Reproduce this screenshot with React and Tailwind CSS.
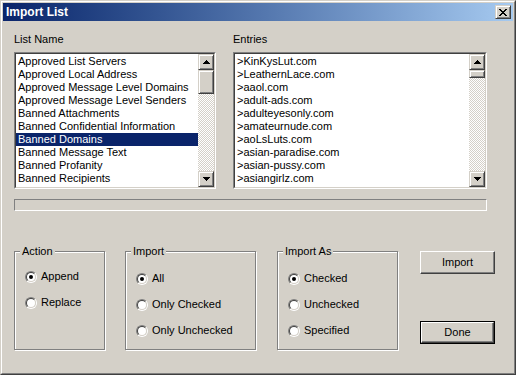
import React from 'react';

const listNames = [
  'Approved List Servers',
  'Approved Local Address',
  'Approved Message Level Domains',
  'Approved Message Level Senders',
  'Banned Attachments',
  'Banned Confidential Information',
  'Banned Domains',
  'Banned Message Text',
  'Banned Profanity',
  'Banned Recipients',
  'Banned Senders',
];

const entries = [
  '>KinKysLut.com',
  '>LeathernLace.com',
  '>aaol.com',
  '>adult-ads.com',
  '>adulteyesonly.com',
  '>amateurnude.com',
  '>aoLsLuts.com',
  '>asian-paradise.com',
  '>asian-pussy.com',
  '>asiangirlz.com',
  '>asiannude.com',
];

const raised =
  'bg-[#d4d0c8] border border-t-[#d4d0c8] border-l-[#d4d0c8] border-r-[#404040] border-b-[#404040] shadow-[inset_1px_1px_0_#fff,inset_-1px_-1px_0_#808080]';

const Arrow = ({ up }) => (
  <svg width="7" height="4" viewBox="0 0 7 4" shapeRendering="crispEdges">
    {up ? (
      <g fill="#000">
        <rect x="3" y="0" width="1" height="1" />
        <rect x="2" y="1" width="3" height="1" />
        <rect x="1" y="2" width="5" height="1" />
        <rect x="0" y="3" width="7" height="1" />
      </g>
    ) : (
      <g fill="#000">
        <rect x="0" y="0" width="7" height="1" />
        <rect x="1" y="1" width="5" height="1" />
        <rect x="2" y="2" width="3" height="1" />
        <rect x="3" y="3" width="1" height="1" />
      </g>
    )}
  </svg>
);

const Scrollbar = ({ thumb }) => (
  <div className="w-[16px] flex flex-col bg-[repeating-conic-gradient(#d4d0c8_0_25%,#fff_0_50%)] bg-[length:2px_2px]">
    <div className={`h-[16px] flex items-center justify-center ${raised}`}>
      <Arrow up />
    </div>
    <div className={`${thumb} ${raised}`} />
    <div className="flex-1" />
    <div className={`h-[16px] flex items-center justify-center ${raised}`}>
      <Arrow />
    </div>
  </div>
);

const ListBox = ({ items, selected, width, thumb }) => (
  <div className={`${width} h-[137px] flex border border-t-[#808080] border-l-[#808080] border-r-white border-b-white`}>
    <div className="flex-1 flex bg-white border border-t-[#404040] border-l-[#404040] border-r-[#d4d0c8] border-b-[#d4d0c8]">
      <div className="flex-1 overflow-hidden pt-[1px]">
        {items.map((item, i) => (
          <div
            key={item}
            className={`h-[13px] leading-[13px] pl-[2px] whitespace-nowrap ${
              i === selected ? 'bg-[#0a246a] text-white' : 'text-black'
            }`}
          >
            {item}
          </div>
        ))}
      </div>
      <Scrollbar thumb={thumb} />
    </div>
  </div>
);

const Radio = ({ label, checked }) => (
  <div className="h-[13px] flex items-center gap-[4px]">
    <div className="w-[12px] h-[12px] rounded-full border border-t-[#808080] border-l-[#808080] border-r-white border-b-white">
      <div className="w-full h-full rounded-full bg-white border border-t-[#404040] border-l-[#404040] border-r-[#d4d0c8] border-b-[#d4d0c8] flex items-center justify-center">
        {checked && <div className="w-[4px] h-[4px] rounded-full bg-black" />}
      </div>
    </div>
    <span className="leading-[13px]">{label}</span>
  </div>
);

const GroupBox = ({ title, width, top, children }) => (
  <div className={`relative ${width} h-[99px] border border-[#808080] shadow-[inset_1px_1px_0_#fff,1px_1px_0_#fff]`}>
    <span className="absolute -top-[7px] left-[5px] px-[2px] h-[13px] leading-[13px] bg-[#d4d0c8]">{title}</span>
    <div className={`flex flex-col gap-[13px] pl-[10px] ${top}`}>{children}</div>
  </div>
);

const Button = ({ children, isDefault }) => (
  <div className={`w-[75px] h-[23px] ${isDefault ? 'border border-black' : ''}`}>
    <div className="w-full h-full flex items-center justify-center bg-[#d4d0c8] border border-t-white border-l-white border-r-[#404040] border-b-[#404040] shadow-[inset_-1px_-1px_0_#808080]">
      {children}
    </div>
  </div>
);

export default function App() {
  return (
    <div className="w-[516px] h-[375px] bg-[#d4d0c8] text-[11px] text-black font-['Liberation_Sans',Arial,sans-serif] border border-t-[#d4d0c8] border-l-[#d4d0c8] border-r-[#404040] border-b-[#404040]">
      <div className="h-full flex flex-col p-[1px] border border-t-white border-l-white border-r-[#808080] border-b-[#808080]">
        {/* title bar */}
        <div className="h-[18px] flex items-center justify-between pl-[3px] pr-[2px] bg-gradient-to-r from-[#0a246a] to-[#a6caf0]">
          <span className="text-white font-bold text-[12px] leading-[18px]">Import List</span>
          <div className={`w-[16px] h-[14px] flex items-center justify-center ${raised}`}>
            <svg width="8" height="7" viewBox="0 0 8 7" shapeRendering="crispEdges">
              <g fill="#000">
                <rect x="0" y="0" width="2" height="1" />
                <rect x="6" y="0" width="2" height="1" />
                <rect x="1" y="1" width="2" height="1" />
                <rect x="5" y="1" width="2" height="1" />
                <rect x="2" y="2" width="4" height="1" />
                <rect x="3" y="3" width="2" height="1" />
                <rect x="2" y="4" width="4" height="1" />
                <rect x="1" y="5" width="2" height="1" />
                <rect x="5" y="5" width="2" height="1" />
                <rect x="0" y="6" width="2" height="1" />
                <rect x="6" y="6" width="2" height="1" />
              </g>
            </svg>
          </div>
        </div>

        <div className="flex-1 flex flex-col pl-[11px] pt-[12px]">
          <div className="flex gap-[17px]">
            <div className="flex flex-col">
              <div className="h-[13px] leading-[13px]">List Name</div>
              <div className="mt-[6px]">
                <ListBox items={listNames} selected={6} width="w-[202px]" thumb="h-[24px]" />
              </div>
            </div>
            <div className="flex flex-col">
              <div className="h-[13px] leading-[13px]">Entries</div>
              <div className="mt-[6px]">
                <ListBox items={entries} selected={-1} width="w-[254px]" thumb="h-[8px]" />
              </div>
            </div>
          </div>

          {/* progress */}
          <div className="w-[473px] h-[12px] mt-[10px] border border-t-[#808080] border-l-[#808080] border-r-white border-b-white" />

          <div className="flex items-start mt-[40px]">
            <GroupBox title="Action" width="w-[91px]" top="pt-[18px]">
              <Radio label="Append" checked />
              <Radio label="Replace" />
            </GroupBox>
            <div className="ml-[20px]">
              <GroupBox title="Import" width="w-[131px]" top="pt-[20px]">
                <Radio label="All" checked />
                <Radio label="Only Checked" />
                <Radio label="Only Unchecked" />
              </GroupBox>
            </div>
            <div className="ml-[21px]">
              <GroupBox title="Import As" width="w-[121px]" top="pt-[20px]">
                <Radio label="Checked" checked />
                <Radio label="Unchecked" />
                <Radio label="Specified" />
              </GroupBox>
            </div>
            <div className="ml-[22px] flex flex-col">
              <Button>Import</Button>
              <div className="mt-[47px]">
                <Button isDefault>Done</Button>
              </div>
            </div>
          </div>
        </div>
      </div>
    </div>
  );
}
